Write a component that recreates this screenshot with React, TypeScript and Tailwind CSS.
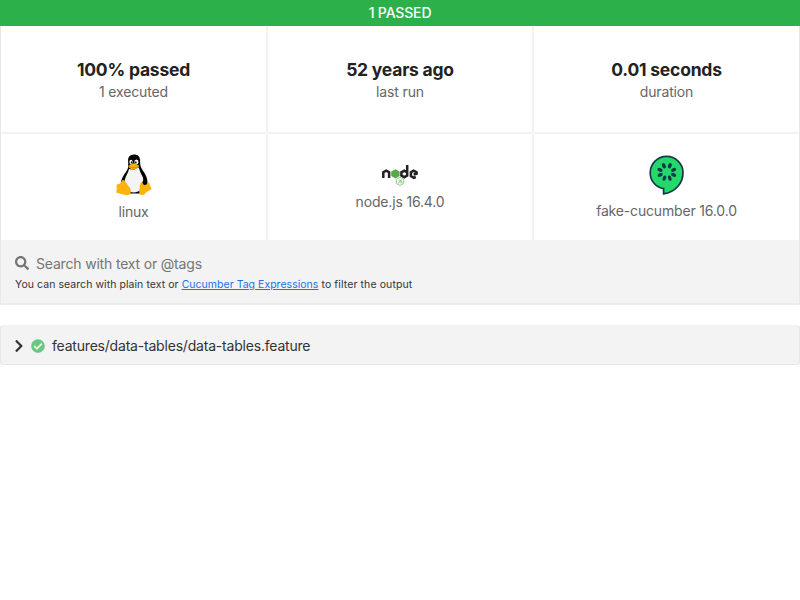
import type { ReactNode } from "react";
import { FaCheckCircle, FaChevronRight, FaSearch } from "react-icons/fa";

function LinuxLogo() {
  return (
    <svg width="36" height="42" viewBox="0 0 36 42" className="block">
      <path
        d="M18 0.4C21.6 0.3 24 2.4 24.1 6.2C24.2 9.3 24 11.6 25.6 14.6C27.6 18.1 30.4 21 31.2 25.4C31.8 29 31.4 32 29.9 34.8L24.4 39.4L11.6 39.6L5 31.4C4.4 28.6 5.4 25 7.4 21.8C8.8 19.4 10.5 17.6 11.7 14.8C12.6 12.4 12.1 9.2 12.1 6.1C12.1 2.6 14.3 0.5 18 0.4Z"
        fill="#050505"
      />
      <path
        d="M13 15C12.6 18.2 9.6 22 8.8 26C8.4 29 9 31 11.3 33.4L13.8 37.4C16.8 39.1 21.5 38.6 24.6 35.8L26.1 28.8C28.2 25.8 27 22.8 25.4 20.4C23.9 18.1 23.8 15.7 22.4 13.3L18 15.8Z"
        fill="#f4f4f6"
      />
      <ellipse cx="15" cy="8" rx="1.6" ry="2.3" fill="#fff" />
      <ellipse cx="20.4" cy="8" rx="2.1" ry="2.6" fill="#fff" />
      <ellipse cx="15.4" cy="8.4" rx="0.7" ry="1.1" fill="#111" />
      <ellipse cx="19.8" cy="8.4" rx="0.8" ry="1.2" fill="#111" />
      <path
        d="M12.7 11.8C13.9 10.5 15.8 9.5 17.4 9.4C19.4 9.6 21.4 10.8 23.1 11.5C23.2 13.3 20.7 14.2 18.7 15.3C16.7 16.2 14.9 15 13.2 13.7C12.5 13.1 12.2 12.5 12.7 11.8Z"
        fill="#fbb20b"
      />
      <path d="M13.2 12.5C16 14 19.2 14 22.3 12.1" fill="none" stroke="#a66b05" strokeWidth="0.5" />
      <path
        d="M6.4 26.2C8.4 25.3 9.7 28 11.2 30.2C12.8 32.5 15.2 34.8 14.9 37.8C14.5 41 11.5 42.1 8.4 40.8C5.8 39.8 2.8 39.8 0.8 38.8C-0.4 37.8 1 35.8 0.8 34C0.2 31.5 0.4 30.5 2.6 30.1C4.8 29.8 5.2 27.3 6.4 26.2Z"
        fill="#fcb30d"
      />
      <path
        d="M25.5 28.2C26.9 27.4 26.2 31.3 29 31C31.4 30.8 31.5 28.2 32.6 28.5C34 29 33.6 31.8 34.8 33.1C36.5 35 34.7 35.8 32.3 37C29.9 38.3 28.7 41.1 26.1 41.1C23.3 41.1 22.7 38.6 23.5 35.8C24.1 33.2 23.5 29.2 25.5 28.2Z"
        fill="#fcb30d"
      />
    </svg>
  );
}

function NodeLogo() {
  return (
    <svg width="36" height="22" viewBox="0 -1 36 22" className="block">
      <g fill="none" stroke="#222" strokeWidth="2.5">
        <path d="M1.3 13V7.2L4.2 5.6L7.1 7.2V13" />
        <path d="M25.2 0V10.5L22.3 12.2L19.4 10.5V7.3L22.3 5.6L25.2 7.3" />
        <path d="M33.8 12L31.8 12.8L28.9 11.1V7.3L31.6 5.6L34.6 7.3V8.8L31.6 9.4" />
      </g>
      <path d="M13.4 4.2L17.6 6.5V11.1L13.4 13.5L9.2 11.1V6.5Z" fill="#58a849" />
      <g fill="none" stroke="#7fb975" strokeWidth="0.8">
        <path d="M18 12.3L21.7 14.4V18.4L18 20.5L14.3 18.4V14.4Z" />
        <path d="M17.2 14.6V17.8L16 18.2M20 15H18.5V16.4H20V17.9H18.3" />
      </g>
    </svg>
  );
}

function CucumberLogo() {
  return (
    <svg width="36" height="41" viewBox="0 -1 36 41" className="block">
      <path
        d="M17.5 1.3C26.5 1.3 34 8.5 34 17.5C34 28.5 26 37.5 14.6 38.8V33.6C7 32.4 1.2 25.8 1.2 17.9C1.2 8.8 8.5 1.3 17.5 1.3Z"
        fill="#23d96c"
        stroke="#173647"
        strokeWidth="1.7"
      />
      <g fill="#173647">
        <ellipse cx="14.9" cy="10.8" rx="1.8" ry="2.8" transform="rotate(-28 14.9 10.8)" />
        <ellipse cx="20.8" cy="10.8" rx="1.8" ry="2.8" transform="rotate(25 20.8 10.8)" />
        <ellipse cx="11" cy="14.8" rx="1.8" ry="2.7" transform="rotate(-65 11 14.8)" />
        <ellipse cx="11.2" cy="19.8" rx="1.8" ry="2.7" transform="rotate(65 11.2 19.8)" />
        <ellipse cx="15.4" cy="23.1" rx="1.7" ry="2.7" transform="rotate(20 15.4 23.1)" />
        <ellipse cx="20.7" cy="23.1" rx="1.7" ry="2.7" transform="rotate(-20 20.7 23.1)" />
        <ellipse cx="24.6" cy="19.8" rx="1.8" ry="2.7" transform="rotate(-65 24.6 19.8)" />
        <ellipse cx="24.6" cy="14.8" rx="1.8" ry="2.7" transform="rotate(65 24.6 14.8)" />
      </g>
    </svg>
  );
}

function Stat({ value, label }: { value: string; label: string }) {
  return (
    <div className="flex flex-col items-center bg-white pt-[33px]">
      <dd className="text-[17.5px] leading-[22px] font-bold tracking-[-0.22px] text-[#222]">{value}</dd>
      <dt className="text-[14px] leading-[22px] tracking-[-0.15px] text-[#666]">{label}</dt>
    </div>
  );
}

function Platform({ icon, label }: { icon: ReactNode; label: string }) {
  return (
    <div className="flex flex-col items-center justify-center bg-white pt-[2px]">
      {icon}
      <span className="mt-[5px] text-[14px] leading-[22px] tracking-[-0.17px] text-[#666]">{label}</span>
    </div>
  );
}

export default function App() {
  return (
    <main className="min-h-[600px] bg-white font-[Inter,sans-serif] text-[#333]">
      <div className="h-[26px] bg-[#2cb14a] text-center text-[14px] leading-[26px] font-medium tracking-[-0.15px] text-white">
        1 PASSED
      </div>
      <dl className="grid h-[214px] grid-cols-[265px_264px_265px] grid-rows-2 gap-[2px] border-x border-[#e8e8e8] bg-[#f3f3f3]">
        <Stat value="100% passed" label="1 executed" />
        <Stat value="52 years ago" label="last run" />
        <Stat value="0.01 seconds" label="duration" />
        <Platform icon={<LinuxLogo />} label="linux" />
        <Platform icon={<NodeLogo />} label="node.js 16.4.0" />
        <Platform icon={<CucumberLogo />} label="fake-cucumber 16.0.0" />
      </dl>
      <section className="h-[65px] border-x border-b-2 border-[#e8e8e8] border-b-[#ebebeb] bg-[#f3f3f3] px-[14px] pt-[13px]">
        <div className="flex h-[22px] items-center gap-[7px]">
          <FaSearch className="mb-[3px] size-[14px] text-[#757575]" />
          <span className="text-[14px] leading-[22px] tracking-[-0.18px] text-[#757575]">Search with text or @tags</span>
        </div>
        <p className="pt-px text-[10.5px] leading-[18px] tracking-[0.06px]">
          You can search with plain text or{" "}
          <a href="#" className="tracking-[0.03px] text-[#1b74e4] underline">Cucumber Tag Expressions</a>
          <span className="tracking-[0.1px]"> to filter the output</span>
        </p>
      </section>
      <section className="mt-[20px] flex h-[40px] items-center rounded-[3px] border border-[#e8e8e8] border-t-[#f3f3f3] bg-[#f3f3f3] pt-px pl-[13px]">
        <FaChevronRight className="h-[14px] w-[10px] text-[#333]" />
        <FaCheckCircle className="ml-[7px] size-[14px] text-[#6bc880]" />
        <span className="ml-[7px] pt-px text-[14px] leading-[22px] tracking-[-0.2px]">
          features/data-tables/data-tables.feature
        </span>
      </section>
    </main>
  );
}
